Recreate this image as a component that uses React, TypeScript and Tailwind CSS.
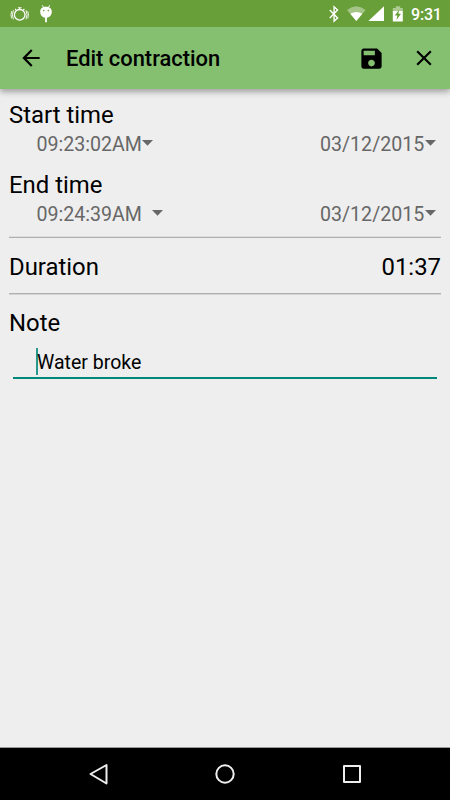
import React from 'react';

const Caret = ({ className = '' }: { className?: string }) => (
  <svg className={`h-[6px] w-[11px] shrink-0 ${className}`} viewBox="0 0 11 6" fill="#676767">
    <path d="M0 0h11L5.5 5.8z" />
  </svg>
);

function TimeRow({ time, date, gap }: { time: string; date: string; gap?: boolean }) {
  return (
    <div className="flex h-[24px] items-center justify-between pl-[27.5px] pr-[5px] text-[19.6px] leading-[24px] text-[#676767]">
      <div className="flex items-center">
        <span className="w-[105.5px] whitespace-nowrap pt-[1px]">{time}</span>
        <Caret className={gap ? 'mb-[2px] ml-[10px]' : 'mb-[2px]'} />
      </div>
      <div className="flex items-center">
        <span className="w-[105px] whitespace-nowrap pt-[1px]">{date}</span>
        <Caret className="mb-[2px]" />
      </div>
    </div>
  );
}

function StatusBar() {
  return (
    <div className="flex h-[27px] items-center bg-[#689f38] text-white">
      <svg className="h-[27px] w-[60px]" viewBox="0 0 60 27" fill="none" stroke="white">
        <circle cx="19.7" cy="14.8" r="5.3" strokeWidth="1.3" />
        <path d="M18 7.800h3.500M19.700 7.800v2M15 9l1.200 1.200M24.400 9l-1.200 1.200" strokeWidth="1.100" />
        <path d="M13.400 10.200q-2 4.600 0 9.200M26 10.200q2 4.600 0 9.200M11.600 11.200q-1.200 3.600 0 7.200M27.800 11.200q1.200 3.600 0 7.200" strokeWidth=".9" />
        <path d="M42.200 5.200l1.600 2.500M49.800 5.200l-1.600 2.500" strokeWidth="1" />
        <path d="M40.200 11.700C40.200 8.500 42.600 6.700 46 6.700s5.800 1.800 5.800 5c0 3.500-2.600 5.800-4.900 6v4.600h-1.800v-4.600c-2.300-.2-4.900-2.500-4.900-6z" fill="white" stroke="none" />
        <circle cx="43.700" cy="10.600" r=".8" fill="#689f38" stroke="none" />
        <circle cx="48.300" cy="10.600" r=".8" fill="#689f38" stroke="none" />
      </svg>
      <svg className="ml-auto h-[27px] w-[85px] shrink-0" viewBox="325 0 85 27" fill="white">
        <path d="M329.800 10l7.800 8-3.500 3.200V6.800l3.500 3.200-7.800 8" fill="none" stroke="white" strokeWidth="1.400" />
        <path d="M347 10q9.300-7.400 18.600 0L356.300 21z" opacity=".4" />
        <path d="M350.300 13.800q6-3.600 12 0L356.300 21z" />
        <path d="M384 6.200V21h-15.600z" />
        <path d="M395.800 6.200h4.400v1.700h2.600V11h-10V7.900h3z" opacity=".45" />
        <path d="M392.800 11h10v10.500h-10z" />
        <path d="M399.300 9.500l-4.500 6h2.600l-.9 4.500 4.500-6.200h-2.700z" fill="#689f38" />
      </svg>
      <span className="w-[40px] whitespace-nowrap pl-[1px] pt-[2px] text-[16px] font-medium leading-[27px] tracking-[-0.2px]">9:31</span>
    </div>
  );
}

export default function App() {
  return (
    <div className="flex h-[800px] w-[450px] flex-col overflow-hidden bg-[#eeeeee] font-['Roboto',sans-serif] text-black">
      <div className="shrink-0 shadow-[0_3px_6px_rgba(0,0,0,0.32)]">
        <StatusBar />
        <header className="flex h-[62px] items-center bg-[#85c071]">
          <svg className="ml-[18px] h-[26px] w-[26px]" viewBox="0 0 24 24">
            <path d="M20 11H7.830l5.590-5.590L12 4l-8 8 8 8 1.410-1.410L7.830 13H20v-2z" />
          </svg>
          <h1 className="ml-[22px] whitespace-nowrap pt-[2px] text-[21.900px] font-medium leading-[30px]">Edit contraction</h1>
          <svg className="ml-auto h-[27px] w-[27px]" viewBox="0 0 24 24">
            <path d="M17 3H5c-1.110 0-2 .9-2 2v14c0 1.100.89 2 2 2h14c1.100 0 2-.9 2-2V7l-4-4zm-5 16c-1.660 0-3-1.340-3-3s1.340-3 3-3 3 1.340 3 3-1.340 3-3 3zm3-10H5V5h10v4z" />
          </svg>
          <svg className="ml-[26px] mr-[13px] h-[26px] w-[26px]" viewBox="0 0 24 24">
            <path d="M19 6.410L17.590 5 12 10.590 6.410 5 5 6.410 10.590 12 5 17.590 6.410 19 12 13.410 17.590 19 19 17.590 13.410 12z" />
          </svg>
        </header>
      </div>

      <main className="flex flex-1 flex-col px-[9px] pt-[11px] text-[23.900px] leading-[30px]">
        <section className="h-[70px]">
          <h2>Start time</h2>
          <div className="pt-[2px]"><TimeRow time="09:23:02AM" date="03/12/2015" /></div>
        </section>
        <section className="h-[67px]">
          <h2>End time</h2>
          <div className="pt-[2px]"><TimeRow time="09:24:39AM" date="03/12/2015" gap /></div>
        </section>
        <section className="flex h-[57px] items-center justify-between border-y border-[#b0b0b0] pt-[2px] shadow-[0_1px_0_#d4d4d4,0_-1px_0_#dddddd]">
          <h2>Duration</h2>
          <span>01:37</span>
        </section>
        <section className="pt-[14px]">
          <h2>Note</h2>
          <div className="mx-[4px] mt-[8px] flex h-[33px] items-start border-b-2 border-[#00897b]">
            <span className="ml-[23px] mt-[2px] h-[27px] w-[2px] bg-[#26998c]" />
            <span className="-ml-[1px] whitespace-nowrap text-[19.500px] leading-[33px]">Water broke</span>
          </div>
        </section>
      </main>

      <nav className="h-[53px] shrink-0 border-t border-[#999999] bg-black">
        <svg className="h-[52px] w-[450px]" viewBox="0 0 450 52" fill="none" stroke="#eeeeee" strokeWidth="2" strokeLinejoin="round">
          <path d="M106.500 17v18.500L90.500 26z" />
          <circle cx="225" cy="26" r="8.700" />
          <rect x="344" y="18" width="16" height="16" />
        </svg>
      </nav>
    </div>
  );
}
